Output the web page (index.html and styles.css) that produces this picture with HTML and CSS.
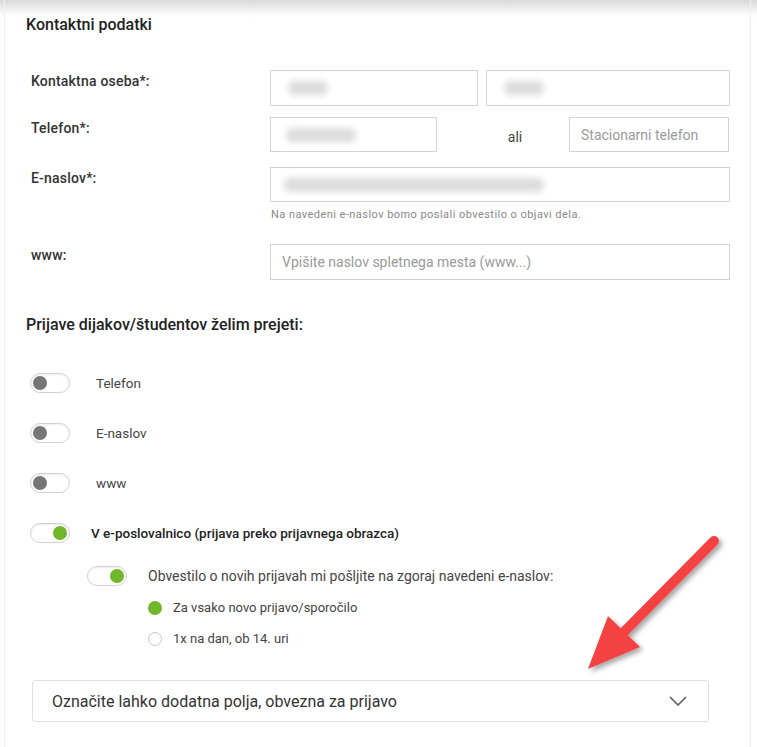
FILE: index.html
```html
<!DOCTYPE html>
<html lang="sl">
<head>
<meta charset="utf-8">
<title>Kontaktni podatki</title>
<link rel="stylesheet" href="styles.css">
</head>
<body>
<div class="page">
  <h2 class="title">Kontaktni podatki</h2>

  <div class="form">
    <div class="row">
      <div class="label">Kontaktna oseba*:</div>
      <div class="fields">
        <div class="input w207"><span class="blur b1"></span></div>
        <div class="input w243"><span class="blur b2"></span></div>
      </div>
    </div>
    <div class="row r2">
      <div class="label">Telefon*:</div>
      <div class="fields">
        <div class="input w166"><span class="blur b3"></span></div>
        <span class="ali">ali</span>
        <div class="input w159 ph">Stacionarni telefon</div>
      </div>
    </div>
    <div class="row r3">
      <div class="label">E-naslov*:</div>
      <div class="fields col">
        <div class="input wfull"><span class="blur b4"></span></div>
        <div class="help">Na navedeni e-naslov bomo poslali obvestilo o objavi dela.</div>
      </div>
    </div>
    <div class="row r4">
      <div class="label">www:</div>
      <div class="fields">
        <div class="input wfull ph">Vpišite naslov spletnega mesta (www...)</div>
      </div>
    </div>
  </div>

  <h2 class="title t2">Prijave dijakov/študentov želim prejeti:</h2>

  <ul class="toggles">
    <li class="trow"><span class="toggle"></span><span class="tlabel">Telefon</span></li>
    <li class="trow"><span class="toggle"></span><span class="tlabel">E-naslov</span></li>
    <li class="trow"><span class="toggle"></span><span class="tlabel">www</span></li>
    <li class="trow"><span class="toggle on"></span><span class="tlabel strong">V e-poslovalnico (prijava preko prijavnega obrazca)</span></li>
  </ul>

  <div class="sub">
    <div class="srow"><span class="toggle on"></span><span class="slabel">Obvestilo o novih prijavah mi pošljite na zgoraj navedeni e-naslov:</span></div>
    <div class="radios">
      <div class="rrow"><span class="radio checked"></span><span class="rlabel">Za vsako novo prijavo/sporočilo</span></div>
      <div class="rrow"><span class="radio"></span><span class="rlabel">1x na dan, ob 14. uri</span></div>
    </div>
  </div>

  <div class="dropdown">
    <span class="dtext">Označite lahko dodatna polja, obvezna za prijavo</span>
    <svg class="chev" width="18" height="10" viewBox="0 0 18 10"><path d="M1 1 L9 9 L17 1" fill="none" stroke="#555" stroke-width="1.5"/></svg>
  </div>

  <svg class="arrow" width="160" height="170" viewBox="0 0 160 170">
    <defs>
      <filter id="sh" x="-20%" y="-20%" width="140%" height="140%">
        <feDropShadow dx="3" dy="3" stdDeviation="2.5" flood-color="#000" flood-opacity="0.35"/>
      </filter>
    </defs>
    <g filter="url(#sh)">
      <line x1="136" y1="25" x2="44" y2="118" stroke="#f44242" stroke-width="10" stroke-linecap="round"/>
      <polygon points="10,153 30,100 62,131" fill="#f44242"/>
    </g>
  </svg>
</div>
</body>
</html>
```
FILE: styles.css
```css
html, body {
  margin: 0;
  padding: 0;
}
body {
  background: linear-gradient(to bottom, #d9d9d9 0px, #fafafa 14px, #ffffff 18px);
  font-family: "Roboto", "Liberation Sans", sans-serif;
  color: #333;
  width: 757px;
  height: 747px;
  overflow: hidden;
}
.page {
  position: relative;
  margin: 0 6px 0 4px;
  height: 747px;
  border-left: 1px solid #efefef;
  border-right: 1px solid #efefef;
  box-sizing: border-box;
  padding-top: 15px;
}
.title {
  margin: 0 0 0 21px;
  font-size: 16px;
  font-weight: 500;
  color: #222;
  line-height: 20px;
}
.form {
  margin-top: 35px;
  padding-left: 26px;
}
.row {
  display: flex;
}
.r2 { margin-top: 11px; }
.r3 { margin-top: 15px; }
.r4 { margin-top: 23px; }
.label {
  width: 239px;
  flex: none;
  font-size: 14px;
  font-weight: 500;
  color: #333;
  padding-top: 3px;
  line-height: 16px;
  letter-spacing: 0.2px;
}
.fields {
  display: flex;
  align-items: center;
}
.fields.col {
  flex-direction: column;
  align-items: flex-start;
}
.input {
  height: 36px;
  box-sizing: border-box;
  border: 1px solid #d4d4d4;
  background: #fff;
  display: flex;
  align-items: center;
  padding-left: 11px;
  font-size: 14px;
  color: #9a9a9a;
}
.w207 { width: 208px; }
.w243 { width: 244px; margin-left: 8px; }
.w166 { width: 167px; }
.w159 { width: 160px; }
.wfull { width: 460px; }
.r2 .input, .r3 .input { height: 35px; }
.ali {
  width: 132px;
  box-sizing: border-box;
  padding-left: 24px;
  text-align: center;
  font-size: 14px;
  color: #444;
  padding-top: 4px;
}
.blur {
  display: block;
  height: 14px;
  background: #dcdcdc;
  filter: blur(3px);
  border-radius: 6px;
}
.b1 { width: 40px; margin-left: 6px; }
.b2 { width: 40px; margin-left: 6px; }
.b3 { width: 70px; margin-left: 4px; }
.b4 { width: 260px; margin-left: 2px; }
.help {
  font-size: 11px;
  color: #888;
  margin-top: 6px;
  padding-left: 1px;
  letter-spacing: 0.45px;
}
.t2 {
  margin-top: 35px;
}
.toggles {
  list-style: none;
  margin: 38px 0 0 0;
  padding: 0 0 0 25px;
}
.trow {
  display: flex;
  align-items: center;
  height: 20px;
  margin-bottom: 30px;
}
.toggle {
  flex: none;
  position: relative;
  width: 40px;
  height: 20px;
  box-sizing: border-box;
  border: 1px solid #d2d2d2;
  border-radius: 10px;
  background: #fff;
  box-shadow: inset 0 1px 2px rgba(0,0,0,0.08);
}
.toggle::after {
  content: "";
  position: absolute;
  left: 2px;
  top: 2px;
  width: 14px;
  height: 14px;
  border-radius: 50%;
  background: #767676;
}
.toggle.on::after {
  left: auto;
  right: 2px;
  background: #72b62a;
}
.tlabel {
  margin-left: 26px;
  font-size: 13.5px;
  color: #444;
}
.tlabel.strong {
  margin-left: 21px;
  font-weight: 500;
  color: #222;
}
.sub {
  margin-top: -7px;
  padding-left: 82px;
}
.srow {
  display: flex;
  align-items: center;
  height: 20px;
}
.slabel {
  margin-left: 21px;
  font-size: 14px;
  color: #444;
}
.radios {
  padding-left: 61px;
  margin-top: 6px;
}
.rrow {
  display: flex;
  align-items: center;
  height: 31px;
}
.radio {
  flex: none;
  width: 14px;
  height: 14px;
  box-sizing: border-box;
  border-radius: 50%;
  border: 1px solid #c8c8c8;
  background: #fff;
}
.radio.checked {
  border: none;
  background: #72b62a;
}
.rlabel {
  margin-left: 11px;
  font-size: 13px;
  color: #444;
}
.dropdown {
  margin: 26px 0 0 27px;
  width: 677px;
  height: 42px;
  box-sizing: border-box;
  border: 1px solid #e0e0e0;
  border-radius: 3px;
  display: flex;
  align-items: center;
  justify-content: space-between;
  padding: 0 21px 0 19px;
}
.dtext {
  font-size: 16px;
  color: #333;
}
.chev {
  display: block;
}
.arrow {
  position: absolute;
  left: 573px;
  top: 516px;
}
```
